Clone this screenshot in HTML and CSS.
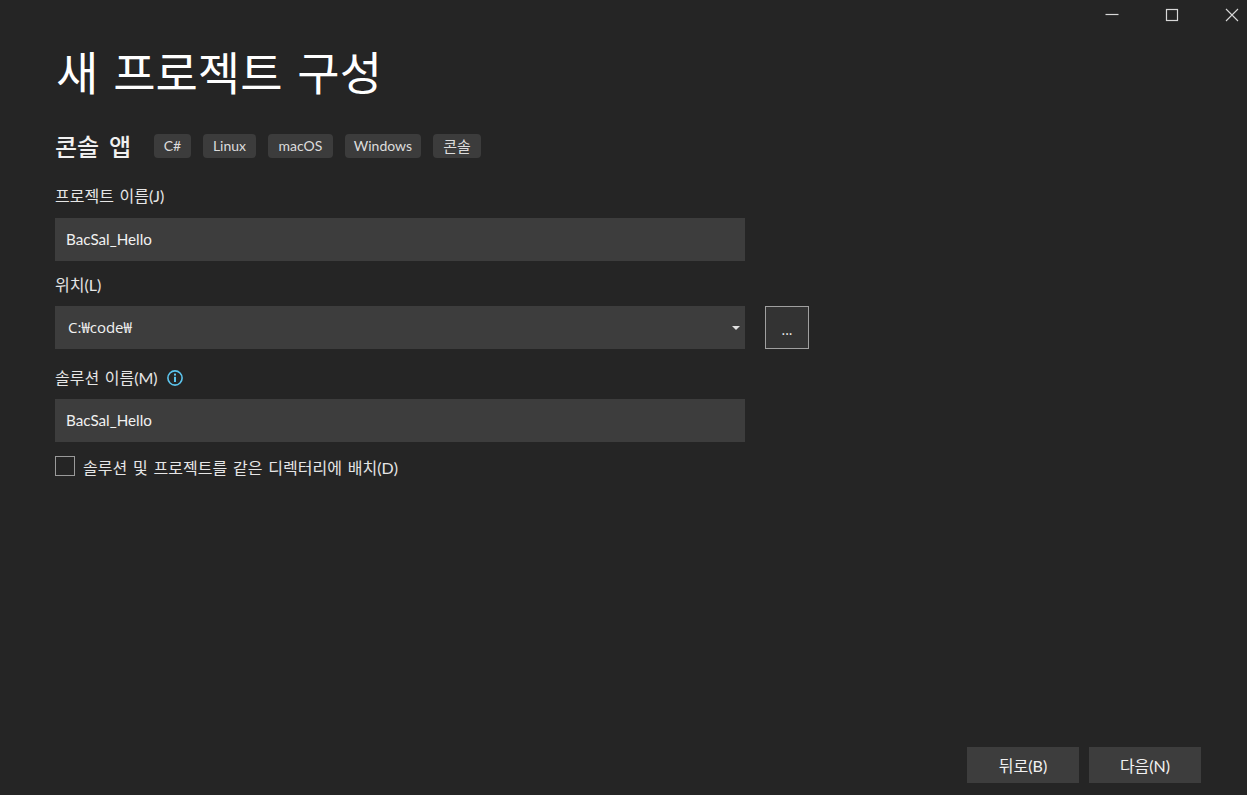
FILE: index.html
```html
<!DOCTYPE html>
<html lang="ko">
<head>
<meta charset="utf-8">
<title>새 프로젝트 구성</title>
<link rel="stylesheet" href="styles.css">
</head>
<body>
<div class="winbar">
  <button class="winbtn"><svg width="14" height="14" viewBox="0 0 14 14"><path d="M0.5 6.5h13" stroke="#d8d8d8" stroke-width="1.2" fill="none"/></svg></button>
  <button class="winbtn"><svg width="14" height="14" viewBox="0 0 14 14"><rect x="1.5" y="1.5" width="11" height="11" stroke="#d8d8d8" stroke-width="1.2" fill="none"/></svg></button>
  <button class="winbtn"><svg width="14" height="14" viewBox="0 0 14 14"><path d="M1 1l12 12M13 1L1 13" stroke="#d8d8d8" stroke-width="1.1" fill="none"/></svg></button>
</div>
<main class="content">
  <h1 class="title">새 프로젝트 구성</h1>
  <div class="subhead">
    <h2 class="subtitle">콘솔 앱</h2>
    <ul class="tags">
      <li class="tag">C#</li>
      <li class="tag">Linux</li>
      <li class="tag">macOS</li>
      <li class="tag">Windows</li>
      <li class="tag tag-ko">콘솔</li>
    </ul>
  </div>
  <div class="label l-project">프로젝트 이름(J)</div>
  <div class="field">BacSal_Hello</div>
  <div class="label l-location">위치(L)</div>
  <div class="location-row">
    <div class="field select"><span class="path">C:₩code₩</span><span class="caret"></span></div>
    <button class="browse">...</button>
  </div>
  <div class="label l-solution">솔루션 이름(M)
    <svg class="info" width="16" height="16" viewBox="0 0 16 16"><circle cx="8" cy="8" r="7.1" fill="none" stroke="#5cc5ee" stroke-width="1.6"/><rect x="7" y="6.8" width="2" height="5.2" fill="#5cc5ee"/><rect x="7" y="3.6" width="2" height="2" fill="#5cc5ee"/></svg>
  </div>
  <div class="field field-solution">BacSal_Hello</div>
  <label class="check"><span class="box"></span><span class="check-text">솔루션 및 프로젝트를 같은 디렉터리에 배치(D)</span></label>
</main>
<footer class="footer">
  <button class="btn">뒤로(B)</button>
  <button class="btn">다음(N)</button>
</footer>
</body>
</html>
```

FILE: styles.css
```css
* { box-sizing: border-box; }
html, body { height: 100%; }
body {
  margin: 0;
  width: 1247px;
  height: 795px;
  overflow: hidden;
  display: flex;
  flex-direction: column;
  background: #252525;
  color: #f1f1f1;
  font-family: "Lato", "Noto Sans CJK KR", sans-serif;
  font-size: 16px;
}
.winbar { display: flex; justify-content: flex-end; gap: 30px; height: 30px; }
.winbtn {
  width: 30px; height: 30px; padding: 0; border: 0; background: none;
  display: flex; align-items: center; justify-content: center;
}
.winbtn svg { display: block; }
.content { flex: 1; padding: 0 0 0 55px; }
.title {
  margin: 8px 0 0 1px;
  font-size: 46px;
  line-height: 64px;
  font-weight: 400;
  word-spacing: 2px;
  color: #fff;
  font-family: "Noto Sans CJK KR", sans-serif;
}
.subhead { display: flex; align-items: center; margin-top: 32px; height: 24px; }
.subtitle { margin: 0; font-size: 24px; line-height: 24px; font-weight: 500; word-spacing: 3px; color: #f1f1f1; font-family: "Noto Sans CJK KR", sans-serif; }
.tags { display: grid; grid-template-columns: 37px 53px 65px 76px 48px; gap: 12px; margin: 0 0 0 23px; padding: 0; list-style: none; }
.tag {
  height: 24px; line-height: 24px; text-align: center; border-radius: 4px;
  background: #3c3c3c; color: #dcdcdc; font-size: 14px;
}
.tag-ko { font-size: 15px; }
.label { color: #e6e6e6; font-size: 16px; line-height: 20px; word-spacing: 1.5px; }
.l-project { margin-top: 28px; }
.l-location { margin-top: 14px; }
.l-solution { margin-top: 19px; display: flex; align-items: center; gap: 9px; }
.field {
  width: 690px; height: 43px; margin-top: 12px; padding: 0 11px;
  background: #3d3d3d; color: #f1f1f1; font-size: 15.2px; line-height: 43px;
}
.field-solution { margin-top: 11px; }
.l-location + .location-row { margin-top: 11px; }
.location-row { display: flex; gap: 20px; }
.select { display: flex; justify-content: space-between; align-items: center; margin-top: 0; padding-right: 5px; padding-left: 13px; }
.path { font-family: "Open Sans", "Noto Sans CJK KR", sans-serif; font-size: 15px; }
.caret { width: 0; height: 0; border-left: 4px solid transparent; border-right: 4px solid transparent; border-top: 4px solid #e0e0e0; }
.browse {
  width: 44px; height: 43px; padding: 4px 0 0; border: 1px solid #a0a0a0; background: #333333; color: #f1f1f1;
  font: 14px "Open Sans", sans-serif;
}
.check { display: flex; align-items: center; gap: 8px; margin-top: 14px; color: #e6e6e6; font-size: 16px; line-height: 16px; }
.check-text { padding-top: 4px; word-spacing: 1.75px; }
.box { width: 20px; height: 20px; border: 1px solid #9a9a9a; }
.footer { display: flex; justify-content: flex-end; gap: 10px; padding: 0 46px 12px 0; }
.btn {
  width: 112px; height: 36px; border: 0; padding: 0; background: #3d3d3d; color: #f1f1f1;
  font: 16px "Lato", "Noto Sans CJK KR", sans-serif;
}
```
